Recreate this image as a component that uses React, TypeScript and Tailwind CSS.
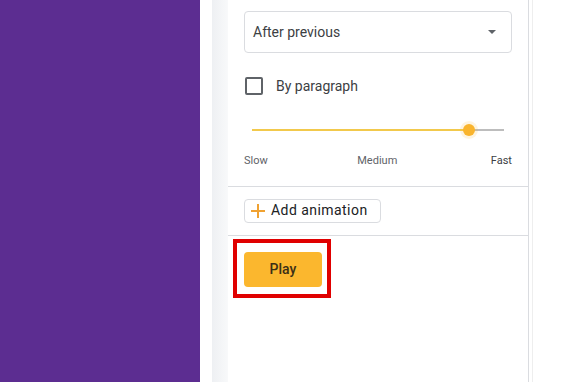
export default function App() {
  return (
    <div className="flex h-[382px] w-[584px] overflow-hidden bg-white font-['Roboto',sans-serif] text-[#3c4043]">
      {/* Slide area */}
      <div className="w-[200px] shrink-0 bg-[#5c2d91]" />
      <div className="w-[12px] shrink-0 bg-white" />
      <div className="w-[16px] shrink-0 bg-gradient-to-r from-[#eef0f3] to-[#f8f9fa]" />

      {/* Animation panel */}
      <div className="flex w-[301px] shrink-0 flex-col border-r border-[#dadce0] bg-white">
        <div className="px-4 pt-[11px]">
          {/* Select */}
          <div className="flex h-[42px] items-center justify-between rounded-[4px] border border-[#dadce0] pl-2 pr-[15px]">
            <span className="text-[14px]">After previous</span>
            <svg width="8" height="4" viewBox="0 0 8 4">
              <path d="M0 0h8L4 4z" fill="#5f6368" />
            </svg>
          </div>

          {/* Checkbox */}
          <div className="mt-[24px] flex h-[18px] items-center">
            <div className="ml-px h-[18px] w-[18px] rounded-[2px] border-2 border-[#5f6368]" />
            <span className="ml-[13px] text-[14px]">By paragraph</span>
          </div>

          {/* Slider */}
          <div className="relative mx-2 mt-[34px] h-[2px] bg-[#bdbdbd]">
            <div className="h-[2px] w-[217px] bg-[#f2c94c]" />
            <div className="absolute left-[211px] top-[-5px] h-[12px] w-[12px] rounded-full bg-[#f9b42d] shadow-[0_0_0_3px_rgba(249,180,45,0.15)]" />
          </div>
          <div className="mt-[22px] flex items-center justify-between text-[11px] text-[#5f6368]">
            <span>Slow</span>
            <span className="-ml-1">Medium</span>
            <span className="text-[#3c4043]">Fast</span>
          </div>
        </div>

        <div className="mt-[16px] border-t border-[#dadce0]" />

        <div className="px-4 pt-[12px] pb-[12px]">
          <button className="flex h-[24px] items-center rounded-[4px] border border-[#dadce0] pl-[6px] pr-[12px]">
            <svg width="14" height="14" viewBox="0 0 14 14">
              <path d="M7 0v14M0 7h14" stroke="#f0a232" strokeWidth="2" />
            </svg>
            <span className="ml-[6px] text-[14px] tracking-[0.45px] text-[#202124]">Add animation</span>
          </button>
        </div>

        <div className="border-t border-[#dadce0]" />

        {/* Highlighted play button */}
        <div className="ml-[5px] mt-[3px] w-[98px] border-[4px] border-[#e00000] px-[7px] pb-[7px] pt-[9px]">
          <button className="flex h-[35px] w-[78px] items-center justify-center rounded-[4px] bg-[#fbb72e] text-[14px] font-medium text-[#3c2f16]">
            Play
          </button>
        </div>
      </div>

      <div className="w-[3px] shrink-0 bg-white" />
      <div className="flex-1 border-l border-[#eeeeee] bg-white" />
    </div>
  );
}
